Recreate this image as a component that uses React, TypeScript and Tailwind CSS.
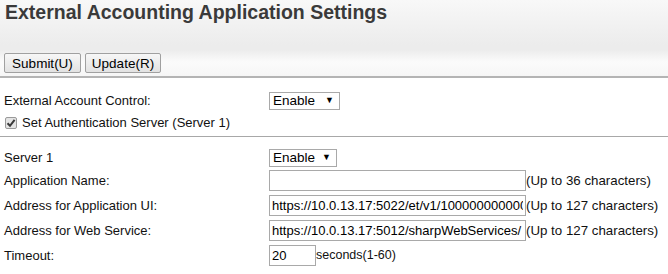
import React from "react";

const font = "font-['Liberation_Sans',Arial,sans-serif]";

function Select({ w }: { w: string }) {
  return (
    <div
      className={`flex items-center justify-between h-[18px] border border-[#a9a9a9] bg-white pl-[3px] pr-[5px] text-[13.5px] text-black ${w}`}
    >
      <span>Enable</span>
      <span className="text-[9px] leading-none">▼</span>
    </div>
  );
}

function TextBox({ value, w }: { value: string; w: string }) {
  return (
    <input
      readOnly
      value={value}
      className={`shrink-0 h-[21px] border border-[#a9a9a9] bg-white px-[2px] text-[13px] text-black outline-none ${w}`}
    />
  );
}

export default function App() {
  const rows = [
    { label: "Application Name:", value: "", note: "(Up to 36 characters)" },
    {
      label: "Address for Application UI:",
      value: "https://10.0.13.17:5022/et/v1/1000000000000000",
      note: "(Up to 127 characters)",
    },
    {
      label: "Address for Web Service:",
      value: "https://10.0.13.17:5012/sharpWebServices/",
      note: "(Up to 127 characters)",
    },
  ];

  return (
    <div className={`w-[668px] h-[274px] bg-white text-[13px] text-[#111] ${font}`}>
      {/* HEADER */}
      <div className="h-[78px] border-b-2 border-[#b4b4b4] bg-[linear-gradient(to_bottom,#f8f8f8_0px,#ececec_45px,#ececec_50px,#fbfbfb_62px,#f6f6f6_76px)] px-[4px]">
        <h1 className="text-[19.5px] font-bold text-[#3a3a3a] leading-[24px] pl-[1px]">
          External Accounting Application Settings
        </h1>
        <div className="flex gap-[4px] mt-[29px]">
          <button className="h-[20px] w-[77px] border border-[#a0a0a0] bg-[linear-gradient(to_bottom,#f7f7f7,#e2e2e2)] text-[13.5px] text-black rounded-[2px]">
            Submit(U)
          </button>
          <button className="h-[20px] w-[76px] border border-[#a0a0a0] bg-[linear-gradient(to_bottom,#f7f7f7,#e2e2e2)] text-[13.5px] text-black rounded-[2px]">
            Update(R)
          </button>
        </div>
      </div>

      {/* ACCOUNT CONTROL */}
      <div className="px-[4px] pt-[13px]">
        <div className="grid grid-cols-[265px_1fr] items-center h-[18px]">
          <span>External Account Control:</span>
          <Select w="w-[71px]" />
        </div>
        <div className="flex items-center gap-[5px] mt-[6px] h-[16px]">
          <span className="flex items-center justify-center w-[12px] h-[12px] ml-[1px] border border-[#9a9a9a] rounded-[2px] bg-[#e4e4e4]">
            <svg width="10" height="10" viewBox="0 0 10 10">
              <path d="M1.5 5.2 L4 7.8 L8.6 1.8" fill="none" stroke="#3a3a3a" strokeWidth="2" />
            </svg>
          </span>
          <span>Set Authentication Server (Server 1)</span>
        </div>
      </div>
      <div className="mt-[5px] border-t border-[#a8a8a8]" />

      {/* SERVER 1 */}
      <div className="px-[4px] pt-[11px]">
        <div className="grid grid-cols-[265px_1fr] items-center h-[18px]">
          <span>Server 1</span>
          <Select w="w-[68px]" />
        </div>
        <div className="flex flex-col gap-[4px] mt-[4px]">
          {rows.map((r) => (
            <div key={r.label} className="grid grid-cols-[265px_1fr] items-center h-[21px]">
              <span>{r.label}</span>
              <div className="flex items-center whitespace-nowrap">
                <TextBox value={r.value} w="w-[257px]" />
                <span className="text-[13.3px]">{r.note}</span>
              </div>
            </div>
          ))}
          <div className="grid grid-cols-[265px_1fr] items-center h-[21px]">
            <span>Timeout:</span>
            <div className="flex items-center whitespace-nowrap">
              <TextBox value="20" w="w-[47px]" />
              <span className="text-[12.5px]">seconds(1-60)</span>
            </div>
          </div>
        </div>
      </div>
    </div>
  );
}
